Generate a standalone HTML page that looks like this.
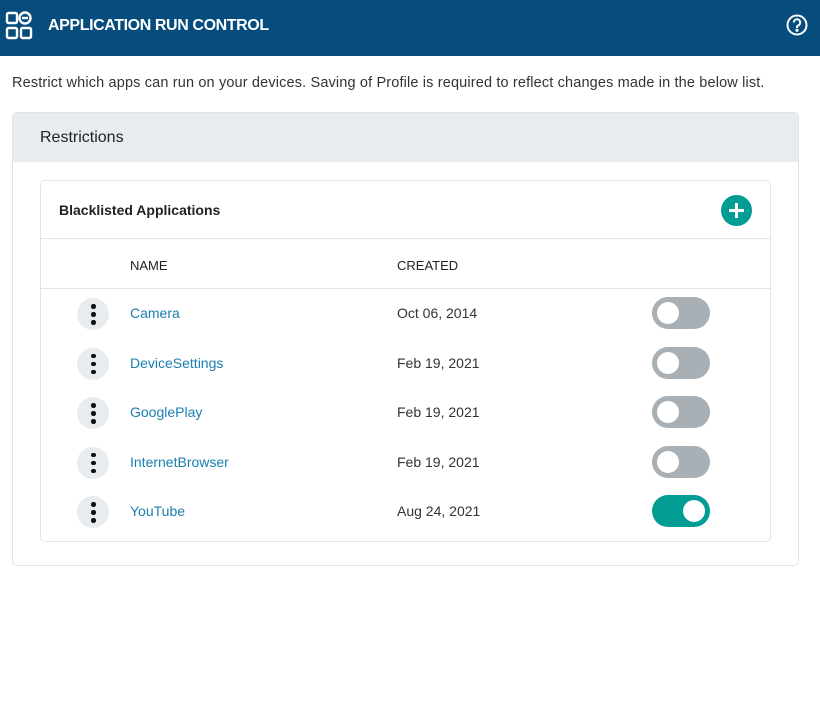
<!DOCTYPE html>
<html><head><style>
*{box-sizing:border-box;margin:0;padding:0}
body{width:820px;height:703px;background:#fff;font-family:"Liberation Sans",sans-serif;position:relative;overflow:hidden;color:#1c1c1c}
.hdr{position:absolute;left:0;top:0;width:820px;height:56px;background:#064c7c}
.hdr .t{position:absolute;left:48px;top:17px;color:#fff;font-weight:bold;font-size:16px;letter-spacing:-0.4px}
.desc{position:absolute;left:12px;top:75px;font-size:14.5px;color:#333;letter-spacing:0.15px}
.card{position:absolute;left:12px;top:112px;width:787px;height:454px;border:1px solid #e1e4e6;border-radius:5px;overflow:hidden}
.ch{height:49px;background:#e9ecee;padding:16px 27px;font-size:16px;color:#222}
.inner{position:absolute;left:27px;top:67px;width:731px;height:362px;border:1px solid #e1e4e6;border-radius:5px}
.it{height:58px;border-bottom:1px solid #e1e4e6;padding:21px 18px;font-size:14px;font-weight:bold;color:#222}
.plus{position:absolute;right:18px;top:14px;width:31px;height:31px;border-radius:50%;background:#019c94}
.plus:before{content:"";position:absolute;left:8px;top:14px;width:15px;height:3px;background:#fff}
.plus:after{content:"";position:absolute;left:14px;top:8px;width:3px;height:15px;background:#fff}
.th{height:50px;border-bottom:1px solid #e1e4e6;position:relative;font-size:13px;color:#222}
.th span{position:absolute;top:19px}
.row{height:49.6px;position:relative;font-size:14px}
.dots{position:absolute;left:36px;top:9px;width:32px;height:32px;border-radius:50%;background:#e9ecee}
.dots i{position:absolute;left:14px;width:4.5px;height:4.5px;border-radius:50%;background:#111}
.name{position:absolute;left:89px;top:16px;color:#1a7fb0}
.date{position:absolute;left:356px;top:16px;color:#333}
.tg{position:absolute;left:611px;top:8px;width:58px;height:32px;border-radius:16px;background:#a8b0b5}
.tg:after{content:"";position:absolute;left:5px;top:5px;width:22px;height:22px;border-radius:50%;background:#fff}
.tg.on{background:#019c94}.tg.on:after{left:31px}
</style></head><body>
<div class="hdr">
<svg style="position:absolute;left:5px;top:11px" width="28" height="30" viewBox="0 0 28 30" fill="none" stroke="#fff" stroke-width="2.4">
<rect x="2" y="2" width="10" height="10" rx="1.5"/><circle cx="20" cy="7" r="5.5"/><line x1="17" y1="7" x2="23" y2="7"/>
<rect x="2" y="17" width="10" height="10" rx="1.5"/><rect x="16" y="17" width="10" height="10" rx="1.5"/></svg>
<div class="t">APPLICATION RUN CONTROL</div>
<svg style="position:absolute;left:786px;top:14px" width="22" height="22" viewBox="0 0 22 22" fill="none" stroke="#fff" stroke-width="2"><circle cx="11" cy="11" r="9.5"/><path d="M7.8 8.5a3.2 3.2 0 1 1 4.5 2.9c-.9.4-1.3 1-1.3 2v.6"/><circle cx="11" cy="16.3" r=".6" fill="#fff"/></svg>
</div>
<div class="desc">Restrict which apps can run on your devices. Saving of Profile is required to reflect changes made in the below list.</div>
<div class="card">
<div class="ch">Restrictions</div>
<div class="inner">
<div class="it">Blacklisted Applications<div class="plus"></div></div>
<div class="th"><span style="left:89px">NAME</span><span style="left:356px">CREATED</span></div>
<div class="row"><div class="dots"><i style="top:6px"></i><i style="top:14px"></i><i style="top:22px"></i></div><span class="name">Camera</span><span class="date">Oct 06, 2014</span><div class="tg"></div></div>
<div class="row"><div class="dots"><i style="top:6px"></i><i style="top:14px"></i><i style="top:22px"></i></div><span class="name">DeviceSettings</span><span class="date">Feb 19, 2021</span><div class="tg"></div></div>
<div class="row"><div class="dots"><i style="top:6px"></i><i style="top:14px"></i><i style="top:22px"></i></div><span class="name">GooglePlay</span><span class="date">Feb 19, 2021</span><div class="tg"></div></div>
<div class="row"><div class="dots"><i style="top:6px"></i><i style="top:14px"></i><i style="top:22px"></i></div><span class="name">InternetBrowser</span><span class="date">Feb 19, 2021</span><div class="tg"></div></div>
<div class="row"><div class="dots"><i style="top:6px"></i><i style="top:14px"></i><i style="top:22px"></i></div><span class="name">YouTube</span><span class="date">Aug 24, 2021</span><div class="tg on"></div></div>
</div>
</div>
</body></html>
